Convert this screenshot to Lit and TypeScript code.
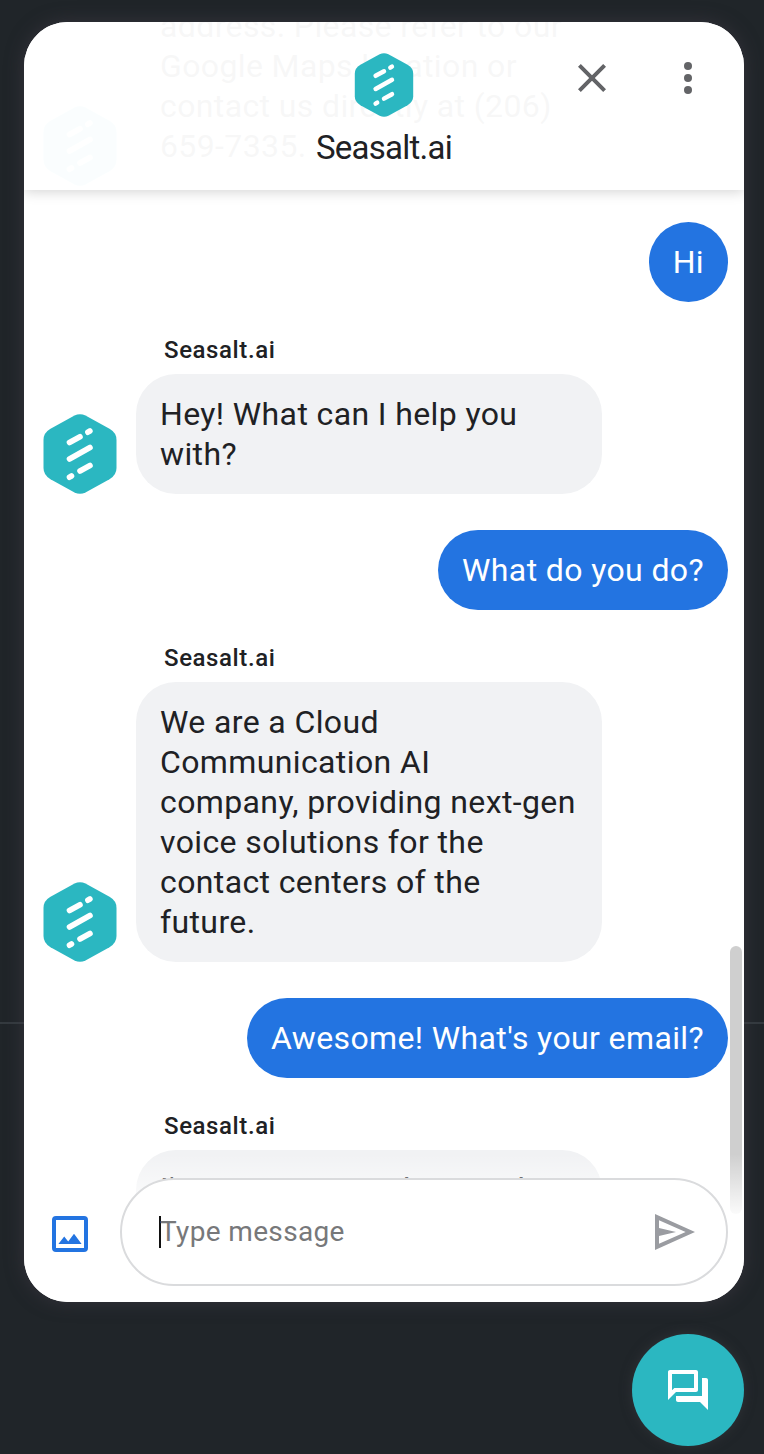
import { LitElement, html, css, svg } from "lit";
import { customElement, property } from "lit/decorators.js";
import { classMap } from "lit/directives/class-map.js";

interface Message {
  from: "agent" | "user";
  text: string;
  label?: boolean;
  tall?: boolean;
}

const THREAD: Message[] = [
  {
    from: "agent",
    text: "address. Please refer to our\nGoogle Maps location or\ncontact us directly at (206)\n659-7335.",
    label: false,
  },
  { from: "user", text: "Hi" },
  { from: "agent", text: "Hey! What can I help you\nwith?", label: true },
  { from: "user", text: "What do you do?" },
  {
    from: "agent",
    text: "We are a Cloud\nCommunication AI\ncompany, providing next-gen\nvoice solutions for the\ncontact centers of the\nfuture.",
    label: true,
  },
  { from: "user", text: "Awesome! What's your email?" },
  { from: "agent", text: "I'm sorry, we are busy at late", label: true, tall: true },
];

@customElement("brand-mark")
class BrandMark extends LitElement {
  static styles = css`
    :host {
      display: block;
      line-height: 0;
    }
    .mark {
      width: 100%;
      height: 100%;
    }
  `;

  render() {
    return html`<svg class="mark" viewBox="0 0 74 80" aria-hidden="true">
      <path
        fill="#2bb7c1"
        d="M31.5 1.6Q37-1.2 42.500 1.600L66.500 14.800Q73.500 18.800 73.500 26V54Q73.500 61.200 66.500 65.200L42.500 78.400Q37 81.200 31.500 78.400L7.500 65.200Q.5 61.200 .5 54V26Q.5 18.800 7.500 14.800Z"
      />
      <g stroke="#fff" stroke-width="5.600" stroke-linecap="round">
        <path d="M26.500 28.500L37 22.800" />
        <path d="M44.900 18.200L46.900 17" />
        <path d="M26.500 45L47 33.500" />
        <path d="M37 57L47 51.500" />
        <path d="M26.500 63.200L28.500 62" />
      </g>
    </svg>`;
  }
}

@customElement("chat-message")
class ChatMessage extends LitElement {
  @property({ attribute: false }) message!: Message;

  static styles = css`
    :host {
      display: block;
    }
    .row {
      display: grid;
      grid-template-columns: 112px 466px;
    }
    .row.user {
      display: flex;
      justify-content: flex-end;
      padding-right: 16px;
    }
    .name {
      grid-column: 2;
      margin: 0 0 12px 28px;
      font-size: 24px;
      line-height: 24px;
      font-weight: 500;
      letter-spacing: 0.6px;
    }
    .avatar {
      grid-column: 1;
      align-self: end;
      width: 74px;
      height: 80px;
      margin-left: 19px;
    }
    .bubble {
      box-sizing: border-box;
      padding: 20px 24px;
      border-radius: 40px;
      background: #f1f2f4;
      font-size: 32px;
      line-height: 40px;
      letter-spacing: 0.38px;
      white-space: pre;
    }
    .bubble.tall {
      min-height: 240px;
      padding-top: 19px;
    }
    .user .bubble {
      background: #2374e1;
      color: #fff;
    }
    .faint .avatar {
      opacity: 0.7;
    }
  `;

  render() {
    const { from, text, label, tall } = this.message;
    if (from === "user") {
      return html`<div class="row user"><div class="bubble">${text}</div></div>`;
    }
    return html`<div class=${classMap({ row: true, faint: !label })}>
      ${label ? html`<div class="name">Seasalt.ai</div>` : null}
      <brand-mark class="avatar"></brand-mark>
      <div class=${classMap({ bubble: true, tall: !!tall })}>${text}</div>
    </div>`;
  }
}

const icon = (shape: unknown) =>
  html`<svg width="48" height="48" viewBox="0 0 24 24" fill="currentColor" aria-hidden="true">${shape}</svg>`;

@customElement("app-root")
class AppRoot extends LitElement {
  static styles = css`
    :host {
      display: block;
      font-family: Roboto, "Liberation Sans", sans-serif;
      color: #202124;
    }
    .page {
      box-sizing: border-box;
      width: 764px;
      height: 1454px;
      padding: 22px 20px 8px 24px;
      display: flex;
      flex-direction: column;
      gap: 32px;
      overflow: hidden;
      background: linear-gradient(#343a3f, #343a3f) 0 1022px / 100% 2px no-repeat #202529;
    }
    .panel {
      display: grid;
      grid-template-rows: 168px 1fr 156px;
      grid-template-columns: 720px;
      height: 1280px;
      flex: none;
      border-radius: 44px;
      overflow: hidden;
      background: #fff;
      box-shadow: 0 0 18px rgba(66, 60, 72, 0.6);
    }
    .thread {
      grid-area: 1 / 1 / 4 / 2;
      min-height: 0;
      overflow: hidden;
    }
    .messages {
      display: flex;
      flex-direction: column;
      gap: 36px;
      margin-top: -36px;
    }
    .header {
      grid-area: 1 / 1;
      z-index: 2;
      display: grid;
      grid-template-columns: 1fr 136px 1fr;
      background: rgba(255, 255, 255, 0.965);
      box-shadow: 0 2px 12px rgba(0, 0, 0, 0.17);
    }
    .brand {
      grid-column: 2;
      display: flex;
      flex-direction: column;
      align-items: center;
      padding-top: 31px;
    }
    .logo {
      width: 60px;
      height: 64px;
    }
    .title {
      margin-top: 11px;
      font-size: 33px;
      line-height: 40px;
      letter-spacing: -0.75px;
      white-space: nowrap;
    }
    .actions {
      display: flex;
      gap: 48px;
      padding: 32px 32px 0 0;
      justify-content: flex-end;
      color: #636467;
    }
    .scrollbar {
      grid-area: 1 / 1 / 4 / 2;
      justify-self: end;
      width: 12px;
      height: 268px;
      margin: 924px 2px 0 0;
      border-radius: 6px;
      background: #cfcfcf;
    }
    .footer {
      grid-area: 3 / 1;
      z-index: 1;
      display: flex;
      box-sizing: border-box;
      padding: 32px 16px 16px 22px;
      background: linear-gradient(rgba(255, 255, 255, 0) 8px, #fff 74px);
    }
    .attach {
      width: 74px;
      padding-top: 32px;
      color: #2374e1;
    }
    .composer {
      flex: 1;
      box-sizing: border-box;
      height: 108px;
      display: flex;
      align-items: center;
      justify-content: space-between;
      padding: 0 27px 0 37px;
      border: 2px solid #dadbdd;
      border-radius: 54px;
      background: #fff;
    }
    .placeholder {
      border-left: 2px solid #111;
      line-height: 32px;
      font-size: 28px;
      letter-spacing: 0.35px;
      text-indent: -1px;
      color: #77787a;
    }
    .send {
      height: 48px;
      color: #9a9ca1;
    }
    .launcher {
      align-self: flex-end;
      flex: none;
      display: grid;
      place-items: center;
      width: 112px;
      height: 112px;
      border-radius: 50%;
      background: #2bb7c1;
      color: #fff;
      box-shadow: 0 0 12px rgba(60, 62, 68, 0.55);
    }
  `;

  render() {
    return html`<div class="page">
      <main class="panel">
        <section class="thread">
          <div class="messages">
            ${THREAD.map((m) => html`<chat-message .message=${m}></chat-message>`)}
          </div>
        </section>
        <div class="scrollbar"></div>
        <header class="header">
          <div class="brand">
            <brand-mark class="logo"></brand-mark>
            <div class="title">Seasalt.ai</div>
          </div>
          <div class="actions">
            ${icon(svg`<path d="M19 6.410L17.590 5 12 10.590 6.410 5 5 6.410 10.590 12 5 17.590 6.410 19 12 13.410 17.590 19 19 17.590 13.410 12z"/>`)}
            ${icon(svg`<circle cx="12" cy="6" r="2"/><circle cx="12" cy="12" r="2"/><circle cx="12" cy="18" r="2"/>`)}
          </div>
        </header>
        <footer class="footer">
          <div class="attach">
            ${icon(svg`<path fill-rule="evenodd" d="M5 3h14a2 2 0 0 1 2 2v14a2 2 0 0 1-2 2H5a2 2 0 0 1-2-2V5a2 2 0 0 1 2-2zm0 2v14h14V5zM6.200 17l2.900-3.700 2 2.400 2.900-3.800 3.800 5.100z"/>`)}
          </div>
          <div class="composer">
            <span class="placeholder">Type message</span>
            <span class="send">${icon(svg`<path fill-rule="evenodd" d="M2 3l20 9-20 9zM4 6.100V10l8.500 2L4 14v3.900L17.300 12z"/>`)}</span>
          </div>
        </footer>
      </main>
      <div class="launcher">
        ${icon(svg`<path d="M15 4v7H5.170L4 12.170V4h11m1-2H3c-.55 0-1 .45-1 1v14l4-4h10c.55 0 1-.45 1-1V3c0-.55-.45-1-1-1zm5 4h-2v9H6v2c0 .55.45 1 1 1h11l4 4V7c0-.55-.45-1-1-1z"/>`)}
      </div>
    </div>`;
  }
}
